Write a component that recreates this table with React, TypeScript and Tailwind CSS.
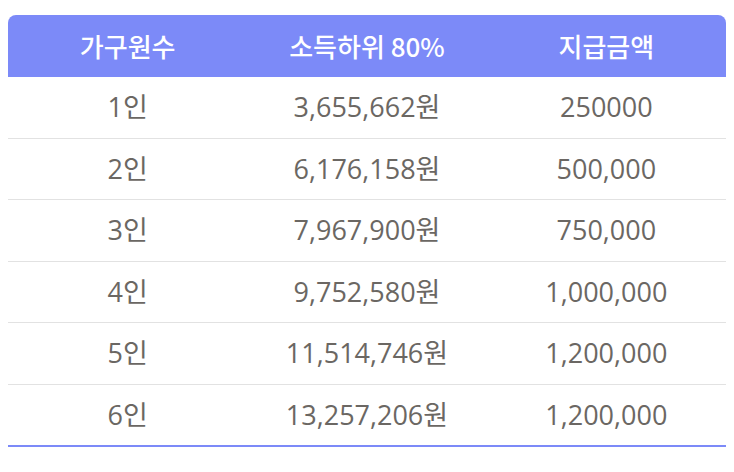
const rows = [
  ["1인", "3,655,662원", "250000"],
  ["2인", "6,176,158원", "500,000"],
  ["3인", "7,967,900원", "750,000"],
  ["4인", "9,752,580원", "1,000,000"],
  ["5인", "11,514,746원", "1,200,000"],
  ["6인", "13,257,206원", "1,200,000"],
];

const App = () => {
  return (
    <div
      className="bg-white w-[734px] h-[472px] px-2 pt-[15px]"
      style={{ fontFamily: '"Open Sans", "Noto Sans CJK KR", sans-serif' }}
    >
      <table className="w-full border-collapse table-fixed border-b-2 border-[#7c8af8]">
        <thead>
          <tr
            className="bg-[#7c8af8] text-white text-[26px] h-[61.5px]"
            style={{ fontFamily: '"Noto Sans CJK KR", sans-serif' }}
          >
            <th className="font-medium rounded-tl-lg">가구원수</th>
            <th className="font-medium">소득하위 80%</th>
            <th className="font-medium rounded-tr-lg">지급금액</th>
          </tr>
        </thead>
        <tbody>
          {rows.map((r, i) => (
            <tr
              key={i}
              className={`h-[61.6px] text-[27px] text-[#6b6763] text-center ${
                i < rows.length - 1 ? "border-b border-[#e2e2e2]" : ""
              }`}
            >
              <td>{r[0]}</td>
              <td>{r[1]}</td>
              <td>{r[2]}</td>
            </tr>
          ))}
        </tbody>
      </table>
    </div>
  );
};

export default App;
